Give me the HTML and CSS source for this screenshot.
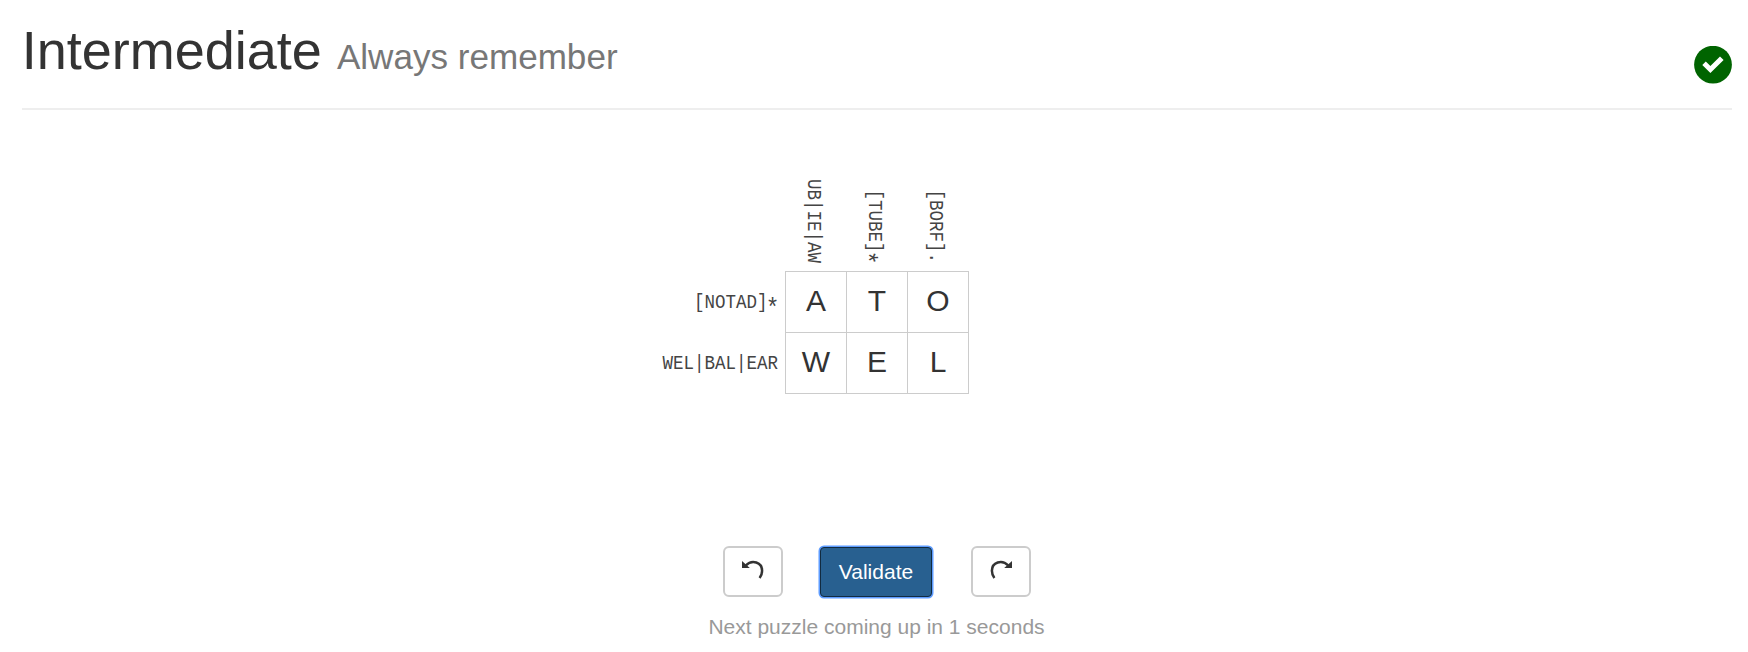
FILE: index.html
```html
<!DOCTYPE html>
<html lang="en">
<head>
<meta charset="utf-8">
<title>Intermediate</title>
<link rel="stylesheet" href="styles.css">
</head>
<body>
<header class="page-header">
  <h1 class="title">Intermediate <small class="subtitle">Always remember</small></h1>
  <svg class="solved" viewBox="0 0 38 38"><circle cx="19" cy="18.7" r="18.9" fill="#006400"/><path d="M8.3 19L11.8 15.5L16.4 20.1L26 10.5L29.6 14.1L16.4 27.1Z" fill="#fff"/></svg>
</header>
<main class="puzzle">
  <div class="corner"></div>
  <div class="columns">
    <div class="column"><span class="column-clue">UB|IE|AW</span></div>
    <div class="column"><span class="column-clue">[TUBE]<span class="star">*</span></span></div>
    <div class="column"><span class="column-clue">[BORF].</span></div>
  </div>
  <div class="rows">
    <div class="row"><span class="row-clue">[NOTAD]<span class="star">*</span></span></div>
    <div class="row"><span class="row-clue">WEL|BAL|EAR</span></div>
  </div>
  <div class="grid">
    <div class="cell">A</div><div class="cell">T</div><div class="cell">O</div>
    <div class="cell">W</div><div class="cell">E</div><div class="cell">L</div>
  </div>
</main>
<footer class="controls">
  <div class="buttons">
    <button class="button" aria-label="Undo"><svg class="icon" viewBox="0 0 22 20"><path d="M3.8 5.5C10 -1 20.1 2.2 20.1 10.8Q20.1 14.8 17.6 18" fill="none" stroke="#333" stroke-width="2.5"/><path d="M0 .9V8.1H7.8Z" fill="#333"/></svg></button>
    <button class="button validate">Validate</button>
    <button class="button" aria-label="Redo"><svg class="icon mirrored" viewBox="0 0 22 20"><path d="M3.8 5.5C10 -1 20.1 2.2 20.1 10.8Q20.1 14.8 17.6 18" fill="none" stroke="#333" stroke-width="2.5"/><path d="M0 .9V8.1H7.8Z" fill="#333"/></svg></button>
  </div>
  <p class="status">Next puzzle coming up in 1 seconds</p>
</footer>
</body>
</html>
```
FILE: styles.css
```css
* { box-sizing: border-box; }
body {
  margin: 0;
  height: 652px;
  overflow: hidden;
  background: #fff;
  color: #333;
  font-family: "Liberation Sans", Arial, sans-serif;
}
.page-header {
  display: flex;
  justify-content: space-between;
  height: 110px;
  margin: 0 16px 0 22px;
  border-bottom: 2px solid #eee;
}
.title {
  margin: 20px 0 0 -.3px;
  font-size: 54px;
  font-weight: 400;
  line-height: 60px;
}
.subtitle { font-size: 35.1px; color: #777; }
.solved { width: 38px; height: 38px; margin-top: 46px; }
.puzzle {
  display: grid;
  grid-template-columns: 785px 184px;
  grid-template-rows: 161px 123px;
}
.columns { display: flex; padding: 0 0 8px; }
.column {
  display: flex;
  width: 61px;
  padding-right: 5px;
  align-items: flex-end;
  justify-content: center;
}
.column-clue, .row-clue {
  font-family: "Liberation Mono", monospace;
  font-size: 20px;
  line-height: 24px;
  white-space: nowrap;
  color: #444;
}
.column-clue {
  writing-mode: vertical-rl;
  transform: scaleY(.875);
  transform-origin: bottom;
}
.star {
  margin: 0 -2px;
  font-size: 26px;
  vertical-align: -8px;
  line-height: 0;
}
.column-clue .star { margin: -2px 0; }
.rows { padding-right: 7px; }
.row {
  display: flex;
  height: 61px;
  padding-top: 2px;
  align-items: center;
  justify-content: flex-end;
}
.row-clue { transform: scaleX(.875); transform-origin: right; }
.grid {
  display: grid;
  grid-template-columns: repeat(3, 61px);
  grid-template-rows: repeat(2, 61px);
  border-top: 1px solid #ccc;
  border-left: 1px solid #ccc;
}
.cell {
  border-right: 1px solid #ccc;
  border-bottom: 1px solid #ccc;
  font-size: 30px;
  line-height: 58px;
  text-align: center;
}
.controls { padding: 152px 0 0 5px; }
.buttons {
  display: flex;
  height: 51px;
  align-items: center;
  justify-content: center;
  gap: 38px;
}
.button {
  display: flex;
  align-items: center;
  justify-content: center;
  width: 60px;
  height: 51px;
  padding: 0;
  border: 2px solid #ccc;
  border-radius: 6px;
  background: #fff;
  color: #333;
  font: 21px "Liberation Sans", Arial, sans-serif;
}
.validate {
  width: 112px;
  height: 50px;
  margin-left: -.5px;
  margin-right: .5px;
  border: 1px solid #122b40;
  border-radius: 4px;
  background: #286090;
  color: #fff;
  box-shadow: 0 0 0 1.5px #5e9cff;
}
.icon { width: 22px; height: 20px; margin-bottom: 3px; }
.mirrored { transform: scaleX(-1); }
.status {
  margin: 15px 0 0;
  color: #999;
  font-size: 21px;
  line-height: 30px;
  text-align: center;
}
```
